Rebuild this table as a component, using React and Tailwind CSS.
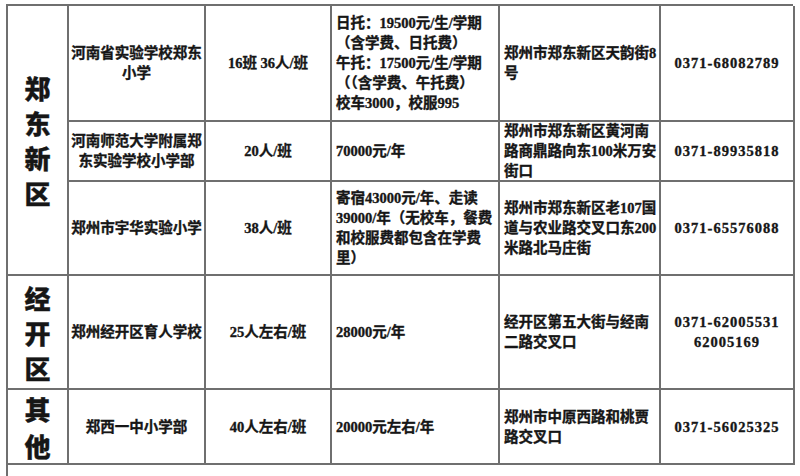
import React from "react";

const font = {
  fontFamily: '"Liberation Serif", "Noto Sans CJK SC", serif',
};

// cell helpers
const Cell = ({ children, align = "center", className = "" }) => (
  <div
    className={`border-r-2 border-b-2 border-[#6f6f6f] flex items-center ${
      align === "center" ? "justify-center text-center" : "justify-start text-left pl-[4px]"
    } ${className}`}
  >
    <div className="whitespace-nowrap">{children}</div>
  </div>
);

const Lines = ({ lines }) =>
  lines.map((l, i) => (
    <div key={i} className="leading-[20px]">
      {l}
    </div>
  ));

const rows = [
  {
    name: ["河南省实验学校郑东", "小学"],
    size: "16班 36人/班",
    cost: [
      "日托：19500元/生/学期",
      "（含学费、日托费）",
      "午托：17500元/生/学期",
      "（（含学费、午托费）",
      "校车3000，校服995",
    ],
    addr: ["郑州市郑东新区天韵街8", "号"],
    phone: ["0371-68082789"],
  },
  {
    name: ["河南师范大学附属郑", "东实验学校小学部"],
    size: "20人/班",
    cost: ["70000元/年"],
    addr: ["郑州市郑东新区黄河南", "路商鼎路向东100米万安", "街口"],
    phone: ["0371-89935818"],
  },
  {
    name: ["郑州市宇华实验小学"],
    size: "38人/班",
    cost: [
      "寄宿43000元/年、走读",
      "39000/年（无校车，餐费",
      "和校服费都包含在学费",
      "里）",
    ],
    addr: ["郑州市郑东新区老107国", "道与农业路交叉口东200", "米路北马庄街"],
    phone: ["0371-65576088"],
  },
  {
    name: ["郑州经开区育人学校"],
    size: "25人左右/班",
    cost: ["28000元/年"],
    addr: ["经开区第五大街与经南", "二路交叉口"],
    phone: ["0371-62005531", "62005169"],
  },
  {
    name: ["郑西一中小学部"],
    size: "40人左右/班",
    cost: ["20000元左右/年"],
    addr: ["郑州市中原西路和桃贾", "路交叉口"],
    phone: ["0371-56025325"],
  },
];

const regions = [
  ["郑", "东", "新", "区"],
  ["经", "开", "区"],
  ["其", "他"],
];

const regionFont = { fontFamily: '"Noto Sans CJK SC", sans-serif' };

export default function App() {
  return (
    <div
      className="w-[800px] h-[476px] bg-white overflow-hidden pt-[4px] pl-[6px] text-[#161616] font-bold [-webkit-text-stroke:0.35px_#161616]"
      style={font}
    >
      <div className="w-[787px] grid grid-cols-[61px_137px_126px_168px_161px_134px] grid-rows-[116px_60px_94px_114px_75px] border-l-2 border-t-2 border-[#6f6f6f] text-[14.5px]">
        {/* region column */}
        <div
          className="row-span-3 col-start-1 row-start-1 border-r-2 border-b-2 border-[#6f6f6f] flex flex-col items-center justify-center text-[26px] leading-[35px] font-black"
          style={regionFont}
        >
          {regions[0].map((c) => (
            <div key={c}>{c}</div>
          ))}
        </div>
        <div
          className="col-start-1 row-start-4 border-r-2 border-b-2 border-[#6f6f6f] flex flex-col items-center justify-center text-[26px] leading-[35px] font-black"
          style={regionFont}
        >
          {regions[1].map((c) => (
            <div key={c}>{c}</div>
          ))}
        </div>
        <div
          className="col-start-1 row-start-5 border-r-2 border-b-2 border-[#6f6f6f] flex flex-col items-center justify-center text-[26px] leading-[37px] font-black"
          style={regionFont}
        >
          {regions[2].map((c) => (
            <div key={c}>{c}</div>
          ))}
        </div>

        {rows.map((r, i) => (
          <React.Fragment key={i}>
            <Cell className="col-start-2">
              <Lines lines={r.name} />
            </Cell>
            <Cell className="col-start-3">
              <div className="leading-[20px]">{r.size}</div>
            </Cell>
            <Cell align="left" className="col-start-4">
              <Lines lines={r.cost} />
            </Cell>
            <Cell align="left" className="col-start-5">
              <Lines lines={r.addr} />
            </Cell>
            <Cell className="col-start-6 tracking-[1px]">
              <Lines lines={r.phone} />
            </Cell>
          </React.Fragment>
        ))}
      </div>
      {/* start of next row, cut off */}
      <div className="h-[20px] border-l-2 border-[#6f6f6f]" />
    </div>
  );
}
